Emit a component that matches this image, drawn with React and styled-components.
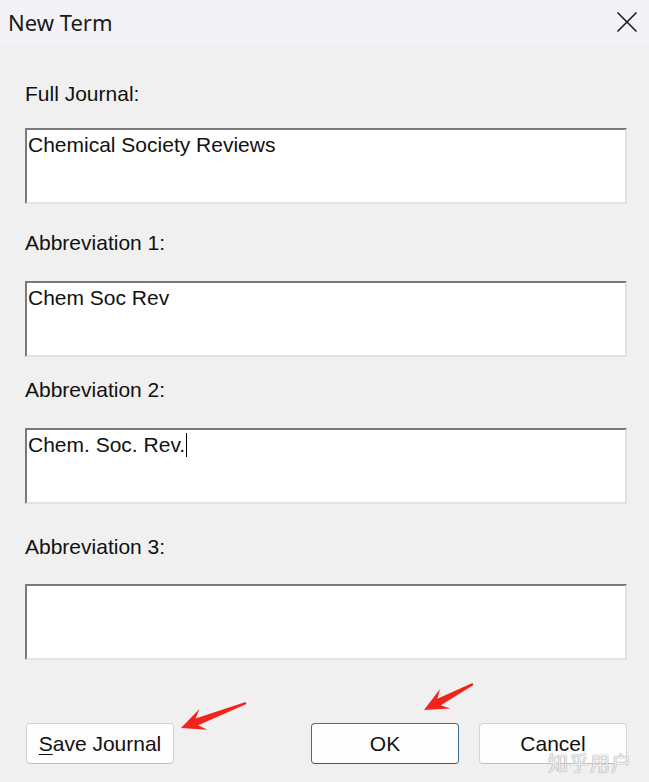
import React from "react";
import styled, { createGlobalStyle } from "styled-components";

const GlobalStyle = createGlobalStyle`
  html, body {
    margin: 0;
    padding: 0;
    background: #f0f0f0;
  }
  body {
    font-family: "Liberation Sans", Arial, sans-serif;
  }
`;

const Dialog = styled.div`
  position: relative;
  width: 649px;
  height: 782px;
  background: #f0f0f0;
  overflow: hidden;
`;

const TitleBar = styled.div`
  display: flex;
  align-items: center;
  justify-content: space-between;
  height: 44px;
  padding: 0 10px 0 8px;
  background: #f3f3f7;
  border-bottom: 6px solid #f1f1f2;
`;

const TitleText = styled.div`
  font-family: "Noto Sans", "Open Sans", sans-serif;
  font-size: 22px;
  color: #1a1a1a;
  margin-top: -1px;
`;

const CloseButton = styled.button`
  display: flex;
  align-items: center;
  justify-content: center;
  width: 24px;
  height: 24px;
  padding: 0;
  border: none;
  background: transparent;
  margin-top: -1px;
`;

const Body = styled.div`
  display: flex;
  flex-direction: column;
  padding: 0 22px 0 25px;
`;

const Label = styled.div`
  font-size: 21px;
  line-height: 24px;
  color: #111;
  margin-top: ${(p) => p.$top}px;
`;

const TextBox = styled.div`
  box-sizing: border-box;
  height: 76px;
  margin-top: ${(p) => p.$gap}px;
  padding: 3px 2px 3px 1px;
  background: #fff;
  border-top: 2px solid #7a7a7a;
  border-left: 2px solid #7a7a7a;
  border-right: 2px solid #e2e2e2;
  border-bottom: 2px solid #e2e2e2;
  font-size: 21px;
  line-height: 24px;
  color: #111;
`;

const Caret = styled.span`
  display: inline-block;
  width: 0;
  height: 24px;
  border-left: 1px solid #000;
  vertical-align: top;
  margin-left: 1px;
`;

const ButtonRow = styled.div`
  display: flex;
  align-items: center;
  gap: 20px;
  margin-top: 63px;
  padding: 0 22px 0 26px;
`;

const Spacer = styled.div`
  flex: 1;
`;

const Button = styled.button`
  box-sizing: border-box;
  width: 148px;
  height: 41px;
  background: #fdfdfd;
  border: 1px solid ${(p) => (p.$primary ? "#3f6c8f" : "#d3d3d3")};
  border-bottom-color: ${(p) => (p.$primary ? "#2f5877" : "#bdbdbd")};
  border-radius: 4px;
  font-family: "Liberation Sans", Arial, sans-serif;
  font-size: 21px;
  color: #111;
  padding: 0;
`;

const Underlined = styled.span`
  text-decoration: underline;
  text-underline-offset: 3px;
  text-decoration-thickness: 1px;
`;

const Arrows = styled.svg`
  position: absolute;
  left: 0;
  top: 0;
  pointer-events: none;
`;

const Watermark = styled.div`
  position: absolute;
  left: 548px;
  top: 748px;
  font-family: "Noto Sans CJK SC", sans-serif;
  font-size: 20px;
  letter-spacing: 1px;
  color: rgba(255, 255, 255, 0.85);
  text-shadow: 0 0 1px #9a9a9a, 0 0 1px #9a9a9a;
  pointer-events: none;
`;

const fields = [
  { label: "Full Journal:", top: 32, gap: 22, value: "Chemical Society Reviews" },
  { label: "Abbreviation 1:", top: 27, gap: 26, value: "Chem Soc Rev" },
  { label: "Abbreviation 2:", top: 21, gap: 26, value: "Chem. Soc. Rev.", caret: true },
  { label: "Abbreviation 3:", top: 31, gap: 25, value: "" },
];

const Arrow = ({ tail, tip }) => {
  const dx = tip[0] - tail[0];
  const dy = tip[1] - tail[1];
  const len = Math.hypot(dx, dy);
  const ux = dx / len;
  const uy = dy / len;
  const nx = -uy;
  const ny = ux;
  const headLen = 24;
  const headW = 11;
  const bx = tip[0] - ux * headLen;
  const by = tip[1] - uy * headLen;
  const nb = tip[0] - ux * (headLen - 7);
  const nby = tip[1] - uy * (headLen - 7);
  const pts = [
    [tail[0] + nx * 1.1, tail[1] + ny * 1.1],
    [nb + nx * 3.6, nby + ny * 3.6],
    [bx + nx * headW, by + ny * headW],
    tip,
    [bx - nx * headW, by - ny * headW],
    [nb - nx * 3.6, nby - ny * 3.6],
    [tail[0] - nx * 1.1, tail[1] - ny * 1.1],
  ];
  return <polygon points={pts.map((p) => p.join(",")).join(" ")} fill="#f2231b" />;
};

export default function App() {
  return (
    <>
      <GlobalStyle />
      <Dialog>
        <TitleBar>
          <TitleText>New Term</TitleText>
          <CloseButton aria-label="Close">
            <svg width="22" height="22" viewBox="0 0 22 22">
              <path d="M1.5 1.5 L20.5 20.5 M20.5 1.5 L1.5 20.5" stroke="#1b1b1b" strokeWidth="1.6" />
            </svg>
          </CloseButton>
        </TitleBar>
        <Body>
          {fields.map((f) => (
            <React.Fragment key={f.label}>
              <Label $top={f.top}>{f.label}</Label>
              <TextBox $gap={f.gap}>
                {f.value}
                {f.caret && <Caret />}
              </TextBox>
            </React.Fragment>
          ))}
        </Body>
        <ButtonRow>
          <Button>
            <Underlined>S</Underlined>ave Journal
          </Button>
          <Spacer />
          <Button $primary>OK</Button>
          <Button>Cancel</Button>
        </ButtonRow>
        <Arrows width="649" height="782" viewBox="0 0 649 782">
          <Arrow tail={[246, 703]} tip={[181, 728]} />
          <Arrow tail={[473, 684]} tip={[424, 710]} />
        </Arrows>
        <Watermark>知乎用户</Watermark>
      </Dialog>
    </>
  );
}
